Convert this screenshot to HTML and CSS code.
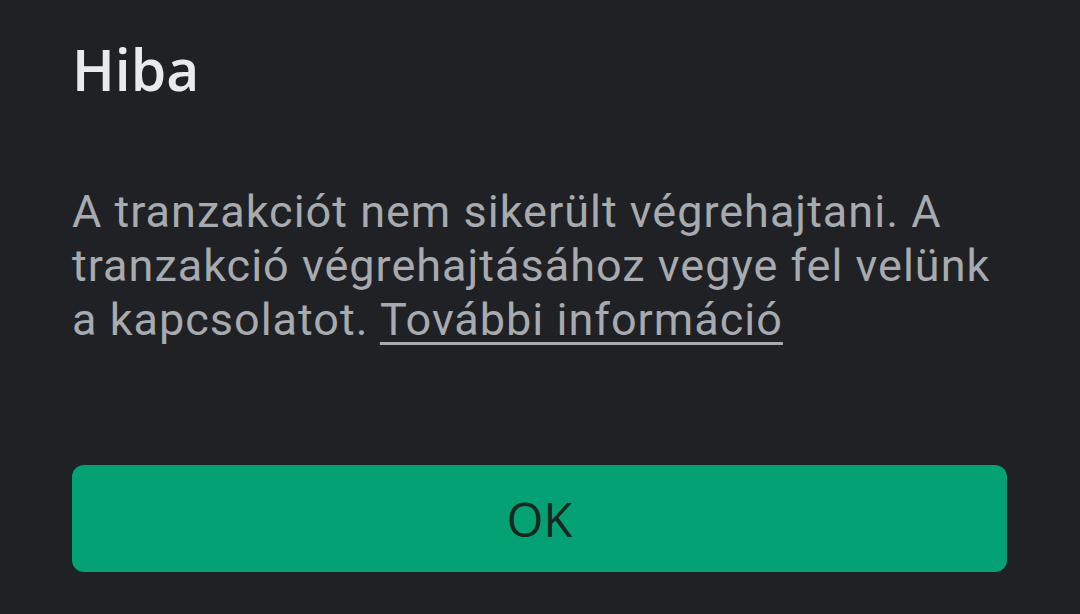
FILE: index.html
```html
<!DOCTYPE html>
<html lang="hu">
<head>
<meta charset="utf-8">
<link rel="stylesheet" href="styles.css">
</head>
<body>
<div class="dialog">
  <h1 class="title">Hiba</h1>
  <p class="message">A tranzakciót nem sikerült végrehajtani. A tranzakció végrehajtásához vegye fel velünk a kapcsolatot. <a class="link" href="#">További információ</a></p>
  <button class="ok">OK</button>
</div>
</body>
</html>
```

FILE: styles.css
```css
html, body {
  margin: 0;
  padding: 0;
  background: #202124;
  width: 1080px;
  height: 614px;
  overflow: hidden;
}
.dialog {
  display: flex;
  flex-direction: column;
  padding: 0 73px 0 72px;
}
.title {
  margin: 29px 0 0 0;
  font-family: "Open Sans", sans-serif;
  font-weight: 600;
  font-size: 57px;
  line-height: 80px;
  color: #e8eaed;
}
.message {
  margin: 76px 0 0 0;
  font-family: Roboto, sans-serif;
  font-size: 45px;
  letter-spacing: 1px;
  line-height: 54px;
  color: #a7abb0;
}
.link {
  color: #a7abb0;
  text-decoration: underline;
  text-decoration-thickness: 3px;
  text-underline-offset: 7px;
}
.ok {
  margin-top: 118px;
  height: 107px;
  border: none;
  border-radius: 12px;
  background: #03a173;
  color: #1a2620;
  font-family: "Open Sans", sans-serif;
  font-weight: 500;
  font-size: 47px;
  padding: 0;
}
```
